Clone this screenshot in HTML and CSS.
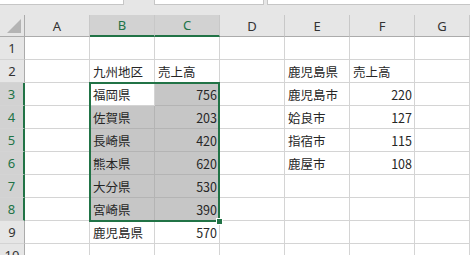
FILE: index.html
```html
<!DOCTYPE html>
<html lang="ja">
<head>
  <meta charset="UTF-8" />
  <title>九州地区 売上高</title>
  <link rel="stylesheet" href="styles.css">
</head>
<body>
  <!-- 名前ボックスと数式バー -->
  <div class="topbar">
    <div class="box name-box"></div>
    <div class="box mid-box"></div>
    <div class="box formula-box"></div>
  </div>

  <div class="sheet">
    <div class="corner"><span class="tri"></span></div>
    <div class="col-head">A</div>
    <div class="col-head sel">B</div>
    <div class="col-head sel">C</div>
    <div class="col-head">D</div>
    <div class="col-head">E</div>
    <div class="col-head">F</div>
    <div class="col-head">G</div>

    <div class="row-head">1</div>
    <div class="cell"></div><div class="cell"></div><div class="cell"></div><div class="cell"></div><div class="cell"></div><div class="cell"></div><div class="cell"></div>

    <div class="row-head">2</div>
    <div class="cell"></div><div class="cell">九州地区</div><div class="cell">売上高</div><div class="cell"></div><div class="cell">鹿児島県</div><div class="cell">売上高</div><div class="cell"></div>

    <div class="row-head sel">3</div>
    <div class="cell"></div><div class="cell active">福岡県</div><div class="cell hl num">756</div><div class="cell"></div><div class="cell">鹿児島市</div><div class="cell num">220</div><div class="cell"></div>

    <div class="row-head sel">4</div>
    <div class="cell"></div><div class="cell hl">佐賀県</div><div class="cell hl num">203</div><div class="cell"></div><div class="cell">姶良市</div><div class="cell num">127</div><div class="cell"></div>

    <div class="row-head sel">5</div>
    <div class="cell"></div><div class="cell hl">長崎県</div><div class="cell hl num">420</div><div class="cell"></div><div class="cell">指宿市</div><div class="cell num">115</div><div class="cell"></div>

    <div class="row-head sel">6</div>
    <div class="cell"></div><div class="cell hl">熊本県</div><div class="cell hl num">620</div><div class="cell"></div><div class="cell">鹿屋市</div><div class="cell num">108</div><div class="cell"></div>

    <div class="row-head sel">7</div>
    <div class="cell"></div><div class="cell hl">大分県</div><div class="cell hl num">530</div><div class="cell"></div><div class="cell"></div><div class="cell"></div><div class="cell"></div>

    <div class="row-head sel">8</div>
    <div class="cell"></div><div class="cell hl">宮崎県</div><div class="cell hl num">390</div><div class="cell"></div><div class="cell"></div><div class="cell"></div><div class="cell"></div>

    <div class="row-head">9</div>
    <div class="cell"></div><div class="cell">鹿児島県</div><div class="cell num">570</div><div class="cell"></div><div class="cell"></div><div class="cell"></div><div class="cell"></div>

    <div class="row-head">10</div>
    <div class="cell"></div><div class="cell"></div><div class="cell"></div><div class="cell"></div><div class="cell"></div><div class="cell"></div><div class="cell"></div>

    <!-- 選択範囲 B3:C8 -->
    <div class="selection"><span class="handle"></span></div>
  </div>
</body>
</html>
```

FILE: styles.css
```css
body {
  margin: 0;
  background: #fff;
  overflow: hidden;
  font-family: "Noto Sans CJK JP", "Noto Sans", sans-serif;
}
.topbar {
  display: flex;
  height: 15px;
  background: #e6e6e6;
}
.box {
  height: 4px;
  background: #fff;
  border-bottom: 1px solid #c6c6c6;
}
.name-box {
  width: 123px;
  border-right: 1px solid #c6c6c6;
}
.mid-box {
  margin-left: 30px;
  width: 108px;
  border-left: 1px solid #c6c6c6;
  border-right: 1px solid #c6c6c6;
}
.formula-box {
  margin-left: 3px;
  flex: 1;
  border-left: 1px solid #c6c6c6;
}
.sheet {
  position: relative;
  display: grid;
  grid-template-columns: 25px repeat(6, 65px) 1fr;
  grid-template-rows: 22px;
  grid-auto-rows: 23px;
}
.corner,
.col-head,
.row-head {
  background: #e6e6e6;
  color: #333;
  font-family: "Noto Sans", "Liberation Sans", sans-serif;
  font-size: 13px;
  box-sizing: border-box;
}
.corner {
  position: relative;
  border-right: 1px solid #ababab;
  border-bottom: 1px solid #ababab;
}
.tri {
  position: absolute;
  right: 3px;
  bottom: 3px;
  width: 0;
  height: 0;
  border-left: 14px solid transparent;
  border-bottom: 14px solid #b4b4b4;
}
.col-head {
  display: flex;
  align-items: center;
  justify-content: center;
  border-right: 1px solid #c8c8c8;
  border-bottom: 1px solid #ababab;
}
.col-head.sel {
  background: #d2d2d2;
  color: #217346;
  border-bottom: 2px solid #217346;
}
.row-head {
  display: flex;
  align-items: center;
  justify-content: center;
  border-right: 1px solid #ababab;
  border-bottom: 1px solid #d4d4d4;
}
.row-head.sel {
  background: #d2d2d2;
  color: #217346;
  border-right: 2px solid #217346;
}
.cell {
  box-sizing: border-box;
  border-right: 1px solid #d4d4d4;
  border-bottom: 1px solid #d4d4d4;
  padding: 0 3px;
  font-size: 12.5px;
  line-height: 23px;
  color: #262626;
  white-space: nowrap;
  overflow: hidden;
}
.cell.num {
  text-align: right;
  padding-right: 2px;
}
.cell.hl {
  background: #c6c6c6;
  border-color: #b4b4b4;
}
.cell.active {
  background: #fff;
}
/* 選択枠はセルの上に重ねる */
.selection {
  position: absolute;
  left: 89px;
  top: 67px;
  width: 131px;
  height: 140px;
  box-sizing: border-box;
  border: 2px solid #217346;
  pointer-events: none;
}
.handle {
  position: absolute;
  right: -5px;
  bottom: -5px;
  width: 5px;
  height: 5px;
  background: #217346;
  border: 1px solid #fff;
}
```
